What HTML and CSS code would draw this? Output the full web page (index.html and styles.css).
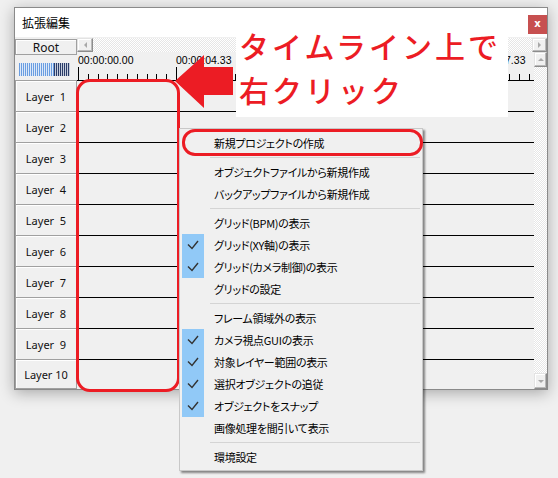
FILE: index.html
```html
<!DOCTYPE html>
<html lang="ja">
<head>
<meta charset="utf-8">
<title>拡張編集</title>
<link rel="stylesheet" href="styles.css">
</head>
<body>
<div class="window">
  <div class="titlebar">
    <span class="title">拡張編集</span>
    <span class="close">x</span>
  </div>
  <div class="client">
    <div class="side">
      <div class="root-btn">Root</div>
      <div class="meter"></div>
      <div class="layer-list">
        <div class="layer-btn">Layer  1</div>
        <div class="layer-btn">Layer  2</div>
        <div class="layer-btn">Layer  3</div>
        <div class="layer-btn">Layer  4</div>
        <div class="layer-btn">Layer  5</div>
        <div class="layer-btn">Layer  6</div>
        <div class="layer-btn">Layer  7</div>
        <div class="layer-btn">Layer  8</div>
        <div class="layer-btn">Layer  9</div>
        <div class="layer-btn">Layer 10</div>
      </div>
    </div>
    <div class="main">
      <div class="hscroll">
        <div class="sbtn sbtn-left"><i class="tri tri-left"></i></div>
        <div class="track"></div>
        <div class="sbtn sbtn-right"><i class="tri tri-right"></i></div>
      </div>
      <div class="body-area">
        <div class="timeline">
          <div class="labels">
            <span class="t0">00:00:00.00</span><span class="t1">00:00:04.33</span><span class="t4">00:00:17.33</span>
          </div>
          <svg class="ruler" width="457" height="14" viewBox="0 0 457 14" shape-rendering="crispEdges">
            <path d="M1.5 1V14M99.5 1V14M197.5 1V14M295.5 1V14M393.5 1V14M11.5 8V14M21.5 8V14M30.5 8V14M40.5 8V14M50.5 8V14M60.5 8V14M70.5 8V14M79.5 8V14M89.5 8V14M109.5 8V14M119.5 8V14M128.5 8V14M138.5 8V14M148.5 8V14M158.5 8V14M168.5 8V14M177.5 8V14M187.5 8V14M207.5 8V14M217.5 8V14M226.5 8V14M236.5 8V14M246.5 8V14M256.5 8V14M266.5 8V14M275.5 8V14M285.5 8V14M305.5 8V14M315.5 8V14M324.5 8V14M334.5 8V14M344.5 8V14M354.5 8V14M364.5 8V14M373.5 8V14M383.5 8V14M403.5 8V14M413.5 8V14M422.5 8V14M432.5 8V14M442.5 8V14M452.5 8V14" stroke="#000" stroke-width="1" fill="none"/>
          </svg>
          <div class="row"></div>
          <div class="row"></div>
          <div class="row"></div>
          <div class="row"></div>
          <div class="row"></div>
          <div class="row"></div>
          <div class="row"></div>
          <div class="row"></div>
          <div class="row"></div>
          <div class="row"></div>
        </div>
        <div class="vscroll">
          <div class="sbtn sbtn-up"><i class="tri tri-up"></i></div>
          <div class="track"></div>
          <div class="sbtn sbtn-down"><i class="tri tri-down"></i></div>
        </div>
      </div>
    </div>
  </div>
</div>

<div class="callout">
  <div>タイムライン上で</div>
  <div>右クリック</div>
</div>

<svg class="arrow" width="70" height="65" viewBox="0 0 70 65">
  <polygon points="5,31 34,5 34,17 63,17 63,45 34,45 34,58" fill="#ec1c24"/>
</svg>

<div class="col-mark"></div>

<div class="menu">
  <div class="item"><span class="gutter"></span><span class="label">新規プロジェクトの作成</span></div>
  <div class="sep"></div>
  <div class="item"><span class="gutter"></span><span class="label">オブジェクトファイルから新規作成</span></div>
  <div class="item"><span class="gutter"></span><span class="label">バックアップファイルから新規作成</span></div>
  <div class="sep"></div>
  <div class="item"><span class="gutter"></span><span class="label">グリッド(BPM)の表示</span></div>
  <div class="item checked"><span class="gutter"><svg width="22" height="22" viewBox="0 0 22 22"><polyline points="6,10.5 10,14.5 16,7" fill="none" stroke="#333" stroke-width="1.4"/></svg></span><span class="label">グリッド(XY軸)の表示</span></div>
  <div class="item checked"><span class="gutter"><svg width="22" height="22" viewBox="0 0 22 22"><polyline points="6,10.5 10,14.5 16,7" fill="none" stroke="#333" stroke-width="1.4"/></svg></span><span class="label">グリッド(カメラ制御)の表示</span></div>
  <div class="item"><span class="gutter"></span><span class="label">グリッドの設定</span></div>
  <div class="sep"></div>
  <div class="item"><span class="gutter"></span><span class="label">フレーム領域外の表示</span></div>
  <div class="item checked"><span class="gutter"><svg width="22" height="22" viewBox="0 0 22 22"><polyline points="6,10.5 10,14.5 16,7" fill="none" stroke="#333" stroke-width="1.4"/></svg></span><span class="label">カメラ視点GUIの表示</span></div>
  <div class="item checked"><span class="gutter"><svg width="22" height="22" viewBox="0 0 22 22"><polyline points="6,10.5 10,14.5 16,7" fill="none" stroke="#333" stroke-width="1.4"/></svg></span><span class="label">対象レイヤー範囲の表示</span></div>
  <div class="item checked"><span class="gutter"><svg width="22" height="22" viewBox="0 0 22 22"><polyline points="6,10.5 10,14.5 16,7" fill="none" stroke="#333" stroke-width="1.4"/></svg></span><span class="label">選択オブジェクトの追従</span></div>
  <div class="item checked"><span class="gutter"><svg width="22" height="22" viewBox="0 0 22 22"><polyline points="6,10.5 10,14.5 16,7" fill="none" stroke="#333" stroke-width="1.4"/></svg></span><span class="label">オブジェクトをスナップ</span></div>
  <div class="item"><span class="gutter"></span><span class="label">画像処理を間引いて表示</span></div>
  <div class="sep"></div>
  <div class="item"><span class="gutter"></span><span class="label">環境設定</span></div>
</div>

<div class="item-mark"></div>
</body>
</html>
```

FILE: styles.css
```css
* { box-sizing: border-box; }

html, body { margin: 0; }

body {
  width: 558px;
  height: 478px;
  padding: 7px 0 0 14px;
  background: #f0f0f0;
  position: relative;
  overflow: hidden;
  font-family: "Noto Sans", "Noto Sans CJK JP", sans-serif;
  color: #111;
}

/* ---------- window ---------- */
.window {
  width: 534px;
  height: 383px;
  border: 1px solid #8a8a8a;
  background: #f0f0f0;
  box-shadow: 0 3px 14px rgba(0, 0, 0, 0.3);
  display: flex;
  flex-direction: column;
}

.titlebar {
  height: 29px;
  flex: none;
  background: #fff;
  display: flex;
  align-items: center;
  padding-left: 7px;
}

.title {
  font-family: "Noto Sans CJK JP", sans-serif;
  font-size: 12px;
  color: #000;
}

.close {
  margin-left: auto;
  align-self: flex-start;
  margin-top: 7px;
  width: 19px;
  height: 19px;
  background: #c75050;
  color: #fff;
  font-family: "DejaVu Sans", sans-serif;
  font-weight: bold;
  font-size: 10px;
  display: flex;
  align-items: center;
  justify-content: center;
  line-height: 1;
  padding-bottom: 2px;
}

.client {
  height: 352px;
  flex: none;
  display: flex;
  overflow: hidden;
}

/* ---------- left column ---------- */
.side {
  width: 62px;
  flex: none;
  padding-top: 2px;
  display: flex;
  flex-direction: column;
}

.root-btn {
  height: 16px;
  border: 1px solid #a0a0a0;
  box-shadow: inset 1px 1px 0 #fff;
  display: flex;
  align-items: center;
  justify-content: center;
  font-size: 12px;
  color: #111;
}

.meter {
  margin: 8px 0 0 4px;
  width: 51px;
  height: 13px;
  background:
    repeating-linear-gradient(90deg, #6a9de0 0 1px, #dce8f8 1px 2px) 0 0 / 35px 100% no-repeat,
    repeating-linear-gradient(90deg, #2b3c68 0 1px, #c5cddc 1px 2px) 35px 0 / 16px 100% no-repeat;
}

.layer-list {
  margin-top: 4px;
  display: flex;
  flex-direction: column;
}

.layer-btn {
  height: 31px;
  flex: none;
  border: 1px solid #a0a0a0;
  border-bottom: none;
  box-shadow: inset 1px 1px 0 #fff;
  display: flex;
  align-items: center;
  justify-content: center;
  font-size: 11px;
  white-space: pre;
  color: #111;
  padding-top: 1px;
}

.layer-btn:last-child {
  height: 30px;
  border-bottom: 1px solid #a0a0a0;
}

/* ---------- main area ---------- */
.main {
  flex: 1;
  display: flex;
  flex-direction: column;
  min-width: 0;
}

.hscroll {
  height: 15px;
  flex: none;
  display: flex;
  padding-top: 1px;
}

.track {
  flex: 1;
  background: repeating-conic-gradient(#ffffff 0 25%, #e6e6e6 0 50%) 0 0 / 2px 2px;
}

.sbtn {
  flex: none;
  background: #f0f0f0;
  border: 1px solid;
  border-color: #e3e3e3 #8c8c8c #8c8c8c #e3e3e3;
  box-shadow: inset -1px -1px 0 #b9b9b9, inset 1px 1px 0 #fff;
  display: flex;
  align-items: center;
  justify-content: center;
}

.sbtn-left { width: 16px; }
.sbtn-right { width: 15px; }
.sbtn-up { height: 15px; }
.sbtn-down { height: 16px; }

.tri { display: block; width: 0; height: 0; border: 3px solid transparent; }
.tri-left { border-right: 3px solid #a8a8a8; border-left-width: 0; }
.tri-right { border-left: 3px solid #a8a8a8; border-right-width: 0; }
.tri-up { border-bottom: 3px solid #a8a8a8; border-top-width: 0; }
.tri-down { border-top: 3px solid #a8a8a8; border-bottom-width: 0; }

.body-area {
  flex: 1;
  display: flex;
  min-height: 0;
}

.timeline {
  flex: 1;
  display: flex;
  flex-direction: column;
  background: #f0f0f0;
  min-width: 0;
}

.labels {
  height: 14px;
  flex: none;
  display: flex;
  padding: 3px 0 0 1px;
  font-family: "Liberation Sans", sans-serif;
  font-size: 10.5px;
  line-height: 11px;
  color: #000;
  white-space: nowrap;
  overflow: hidden;
}

.labels span {
  width: 98px;
  flex: none;
}

.labels .t4 { margin-left: 196px; }

.ruler {
  display: block;
  flex: none;
}

.row {
  height: 31px;
  flex: none;
  border-top: 1px solid #000;
}

.vscroll {
  width: 13px;
  flex: none;
  display: flex;
  flex-direction: column;
}

/* ---------- overlays ---------- */
.callout {
  position: absolute;
  left: 236px;
  top: 20px;
  width: 272px;
  height: 97px;
  background: #fff;
  padding: 3px 0 0 3px;
  font-family: "Noto Sans CJK JP", sans-serif;
  font-weight: 500;
  font-size: 30px;
  line-height: 44px;
  letter-spacing: 3px;
  color: #ec1c24;
  white-space: nowrap;
}

.arrow {
  position: absolute;
  left: 170px;
  top: 50px;
}

.col-mark {
  position: absolute;
  left: 76px;
  top: 79px;
  width: 104px;
  height: 313px;
  border: 3px solid #ec1c24;
  border-radius: 14px;
}

.menu {
  position: absolute;
  left: 179px;
  top: 128px;
  width: 244px;
  height: 343px;
  background: #f0f0f0;
  border: 1px solid #c8c8c8;
  box-shadow: 2px 2px 2px rgba(0, 0, 0, 0.45);
  padding: 3px 2px;
  font-family: "Noto Sans CJK JP", sans-serif;
  font-size: 11px;
  font-feature-settings: "palt";
  letter-spacing: -0.3px;
  color: #000;
}

.item {
  height: 22px;
  display: flex;
  align-items: center;
}

.gutter {
  width: 22px;
  height: 22px;
  flex: none;
  margin-right: 10px;
}

.gutter svg { display: block; }

.item.checked .gutter { background: #91c9f7; }

.label { white-space: nowrap; }

.sep {
  height: 7px;
  margin-left: 28px;
  position: relative;
}

.sep::after {
  content: "";
  position: absolute;
  left: 0;
  right: 0;
  top: 3px;
  height: 1px;
  background: #d4d4d4;
}

.item-mark {
  position: absolute;
  left: 182px;
  top: 129px;
  width: 241px;
  height: 27px;
  border: 3px solid #ec1c24;
  border-radius: 13px;
}
```
